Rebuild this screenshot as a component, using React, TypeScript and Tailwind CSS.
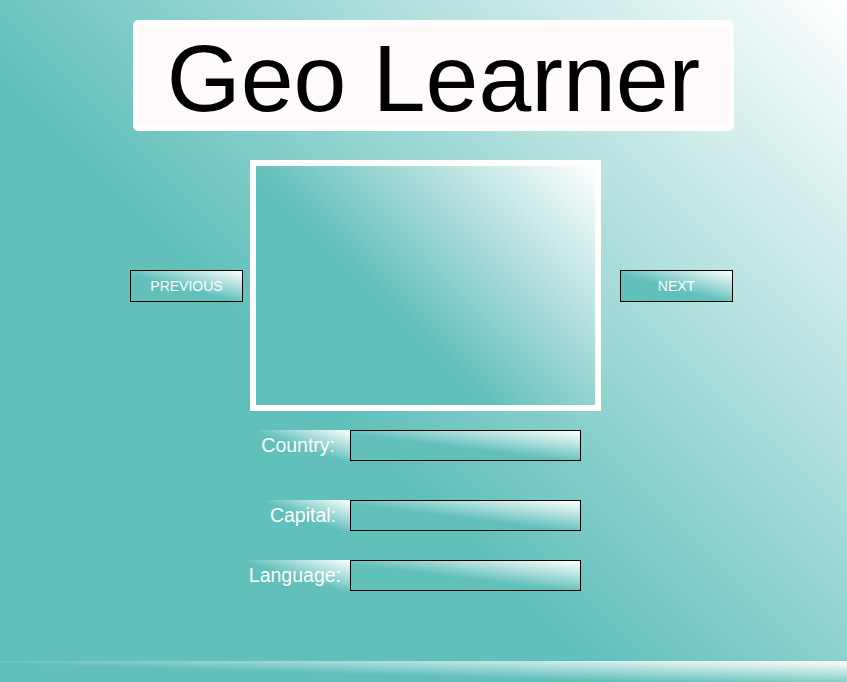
const fields = [
  { label: "Country:", w: "w-[92px] pr-[15px]", mt: "mt-[19px]" },
  { label: "Capital:", w: "w-[82px] pr-[14px]", mt: "mt-[39px]" },
  { label: "Language:", w: "w-[102px] pr-[9px]", mt: "mt-[29px]" },
];

// page and picture frame use a fixed 45deg slope, the small boxes run corner to corner
const grad = "bg-[linear-gradient(45deg,#62c0bb_40%,#ffffff)]";
const corner = "bg-[linear-gradient(to_top_right,#62c0bb_45%,#ffffff)]";

function NavButton({ text }: { text: string }) {
  return (
    <button
      className={`w-[113px] h-[32px] border border-black ${corner} text-white text-[14px] leading-none uppercase`}
    >
      {text}
    </button>
  );
}

export default function App() {
  return (
    <div
      className={`w-full h-[682px] overflow-hidden pt-[20px] ${grad} font-['Liberation_Sans',Arial,sans-serif]`}
    >
      <h1 className="ml-[133px] w-[601px] h-[111px] pt-[5px] rounded-[5px] border-[5px] border-white bg-[#fffafa] text-center text-[95px] leading-[96px] text-black">
        Geo Learner
      </h1>

      <div className="mt-[29px] flex items-center">
        <div className="ml-[130px]">
          <NavButton text="Previous" />
        </div>
        <div className={`ml-[7px] w-[351px] h-[251px] border-[6px] border-white ${grad}`} />
        <div className="ml-[19px]">
          <NavButton text="Next" />
        </div>
      </div>

      {fields.map((f) => (
        <div key={f.label} className={`${f.mt} w-[581px] flex justify-end items-center`}>
          <label
            className={`${f.w} h-[31px] flex items-center justify-end ${corner} text-white text-[19.5px]`}
          >
            {f.label}
          </label>
          <div className={`w-[231px] h-[31px] border border-black ${corner}`} />
        </div>
      ))}

      <footer className={`mt-[70px] w-full h-[25px] ${corner}`} />
    </div>
  );
}
